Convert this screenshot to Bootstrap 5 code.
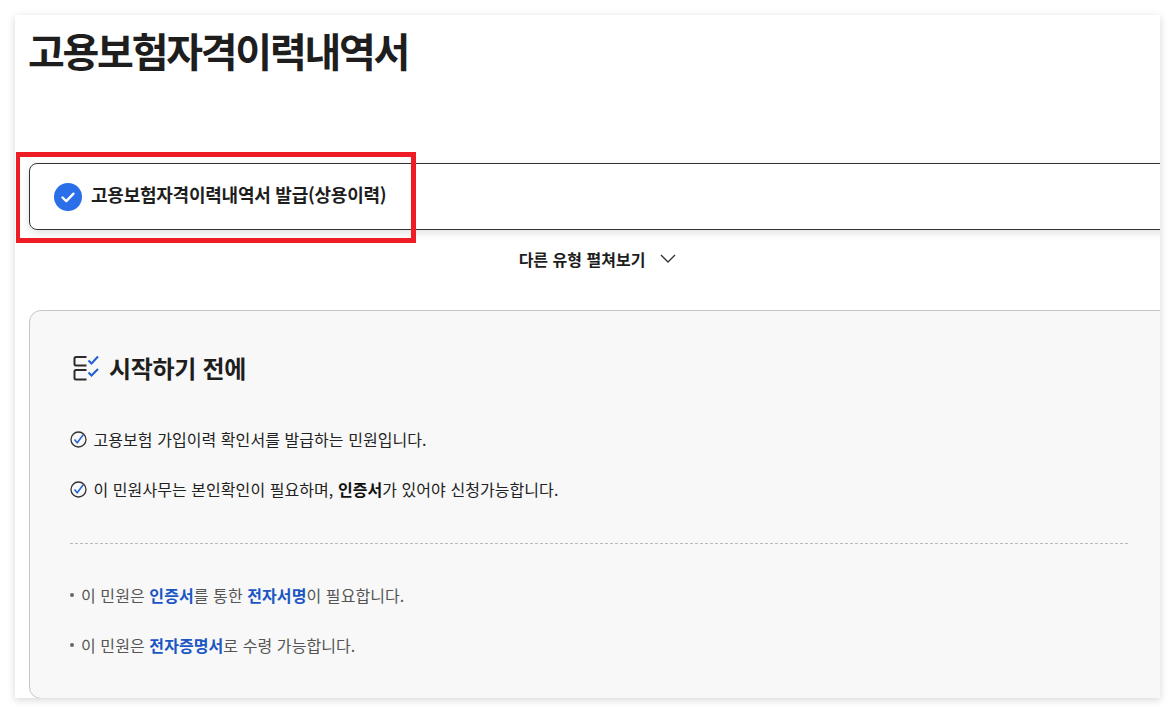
<!doctype html>
<html lang="ko">
<head>
<meta charset="utf-8">
<title>고용보험자격이력내역서</title>
<link rel="stylesheet" href="https://cdn.jsdelivr.net/npm/bootstrap@5.3.0/dist/css/bootstrap.min.css">
<style>
html,body{height:100%;}
body{background:#fff;font-family:"Noto Sans CJK KR","Noto Sans",sans-serif;color:#1e1e1e;overflow:hidden;}
.sheet{position:relative;margin:15px 15px 0 15px;height:683px;background:#fff;box-shadow:0 2px 8px rgba(0,0,0,.16);overflow:hidden;padding:0 0 0 14px;}
.sheet-inner{width:1160px;}
.page-title{font-size:40px;font-weight:700;line-height:56px;margin:7px 0 0 -1px;letter-spacing:-2.24px;color:#1e1e1e;}
.type-box{margin-top:85px;height:67px;border:1px solid #333;border-radius:8px;padding:0 24px 5px;font-size:18px;font-weight:700;letter-spacing:-.24px;box-shadow:0 3px 8px rgba(0,0,0,.12);gap:9px;}
.type-box svg{margin-top:5px;}
.toggle-row{height:58px;font-size:16px;font-weight:700;gap:15px;width:1137px;}
.intro-box{margin-top:22px;height:389px;background:#f8f8f8;border:1px solid #c6c6c6;border-radius:12px;padding:40px 60px 40px 40px;}
.intro-head{font-size:24px;font-weight:700;gap:8px;line-height:36px;letter-spacing:-.3px;margin-top:-1px;}
.check-row{font-size:16px;gap:6.500px;line-height:24px;color:#222;letter-spacing:.06px;}
.check-one{margin-top:41px;}
.check-two{margin-top:26px;}
.dash-line{border-top:1px dashed #bbb;margin:42px 0 39px;}
.bullet-row{font-size:16px;line-height:24px;color:#555;padding-left:11px;position:relative;margin-bottom:26px;letter-spacing:.08px;}
.bullet-row::before{content:"";position:absolute;left:0;top:10px;width:4px;height:4px;border-radius:50%;background:#666;}
.hl-blue{color:#1a56c4;font-weight:700;}
.hl-dark{color:#111;font-weight:700;}
.red-frame{position:absolute;left:1px;top:137px;width:400px;height:91px;border:solid #ee1c25;border-width:5px 5px 5px 4px;pointer-events:none;}
</style>
</head>
<body>
<div class="sheet">
  <div class="sheet-inner">
    <h1 class="page-title">고용보험자격이력내역서</h1>
    <div class="type-box d-flex align-items-center">
      <svg width="28" height="28" viewBox="0 0 28 28" aria-hidden="true"><circle cx="14" cy="14" r="14" fill="#2a6ee8"/><path d="M8.500 14.500l3.800 3.600 7.200-7.400" fill="none" stroke="#fff" stroke-width="2.400" stroke-linecap="round" stroke-linejoin="round"/></svg>
      <span>고용보험자격이력내역서 발급(상용이력)</span>
    </div>
    <div class="toggle-row d-flex align-items-center justify-content-center">
      <span>다른 유형 펼쳐보기</span>
      <svg width="16" height="10" viewBox="0 0 16 10" aria-hidden="true"><path d="M1 1l7 7 7-7" fill="none" stroke="#333" stroke-width="1.400"/></svg>
    </div>
    <div class="intro-box">
      <div class="intro-head d-flex align-items-center">
        <svg width="31" height="27" viewBox="0 0 31 27" aria-hidden="true"><path d="M16.500 2H6a1.500 1.500 0 0 0-1.500 1.500V9A1.500 1.500 0 0 0 6 10.500H16.500M16.500 15H6a1.500 1.500 0 0 0-1.500 1.500V23A1.500 1.500 0 0 0 6 24.500H16.500" fill="none" stroke="#2b2b2b" stroke-width="2"/><path d="M18.500 5.500l3 3 6.500-7M18.500 17.500l3 3 6.500-6.500" fill="none" stroke="#1f5fd0" stroke-width="2"/></svg>
        <span>시작하기 전에</span>
      </div>
      <div class="check-row check-one d-flex align-items-center">
        <svg width="17" height="17" viewBox="0 0 17 17" aria-hidden="true"><circle cx="8.500" cy="8.500" r="7.500" fill="none" stroke="#333" stroke-width="1.300"/><path d="M4.500 8.500l2.700 3.300 6-8" fill="none" stroke="#1f5fd0" stroke-width="1.500"/></svg>
        <span>고용보험 가입이력 확인서를 발급하는 민원입니다.</span>
      </div>
      <div class="check-row check-two d-flex align-items-center">
        <svg width="17" height="17" viewBox="0 0 17 17" aria-hidden="true"><circle cx="8.500" cy="8.500" r="7.500" fill="none" stroke="#333" stroke-width="1.300"/><path d="M4.500 8.500l2.700 3.300 6-8" fill="none" stroke="#1f5fd0" stroke-width="1.500"/></svg>
        <span>이 민원사무는 본인확인이 필요하며, <b class="hl-dark">인증서</b>가 있어야 신청가능합니다.</span>
      </div>
      <div class="dash-line"></div>
      <div class="bullet-row">이 민원은 <b class="hl-blue">인증서</b>를 통한 <b class="hl-blue">전자서명</b>이 필요합니다.</div>
      <div class="bullet-row">이 민원은 <b class="hl-blue">전자증명서</b>로 수령 가능합니다.</div>
    </div>
  </div>
  <div class="red-frame"></div>
</div>
<script src="https://cdn.jsdelivr.net/npm/bootstrap@5.3.0/dist/js/bootstrap.bundle.min.js"></script>
</body>
</html>
